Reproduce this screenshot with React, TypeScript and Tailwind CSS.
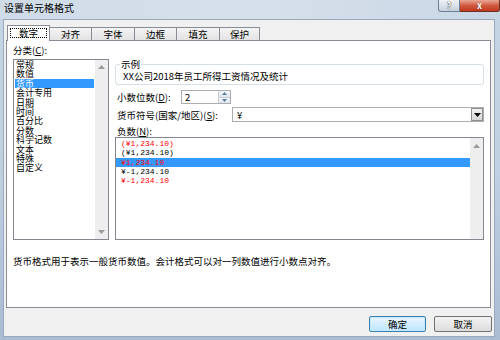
import React from "react";

const cats = ["常规", "数值", "货币", "会计专用", "日期", "时间", "百分比", "分数", "科学记数", "文本", "特殊", "自定义"];
const negs = [
  { t: "(¥1,234.10)", red: true, sel: false },
  { t: "(¥1,234.10)", red: false, sel: false },
  { t: "¥1,234.10", red: true, sel: true },
  { t: "¥-1,234.10", red: false, sel: false },
  { t: "¥-1,234.10", red: true, sel: false },
];
const tabs = [
  { t: "对齐", w: "w-[43px]" },
  { t: "字体", w: "w-[44px]" },
  { t: "边框", w: "w-[43px]" },
  { t: "填充", w: "w-[44px]" },
  { t: "保护", w: "w-[41px]" },
];

function UpTri() {
  return (
    <svg width="7" height="4" viewBox="0 0 7 4">
      <path d="M0 4 L3.5 0 L7 4 Z" fill="#9a9a9a" />
    </svg>
  );
}
function DownTri({ color = "#9a9a9a" }: { color?: string }) {
  return (
    <svg width="7" height="4" viewBox="0 0 7 4">
      <path d="M0 0 L7 0 L3.5 4 Z" fill={color} />
    </svg>
  );
}

function Scrollbar() {
  return (
    <div className="w-[13px] self-stretch bg-[#eeeeee] flex flex-col items-center justify-between py-[5px]">
      <UpTri />
      <DownTri />
    </div>
  );
}

function U({ c }: { c: string }) {
  return (
    <>
      (<span className="underline">{c}</span>)
    </>
  );
}

export default function App() {
  return (
    <div className="w-[500px] h-[340px] flex flex-col bg-gradient-to-b from-[#c6d5e4] via-[#bfd0e2] to-[#a9bcd2] font-['Noto_Sans_CJK_SC',sans-serif] text-black overflow-hidden">
      {/* title bar */}
      <div className="h-[19px] flex items-start shrink-0 bg-gradient-to-r from-[#cfdbe7] via-[#d6e0ea] to-[#c9d7e5]">
        <span className="pl-[4px] pt-[2px] text-[10px] leading-[12px] text-black">设置单元格格式</span>
        <div className="ml-auto flex">
          <div className="w-[22px] h-[12px] rounded-bl-[3px] border border-t-0 border-[#6f7f93] bg-gradient-to-b from-[#eef2f6] to-[#c6d1dd] flex items-center justify-center text-[9px] leading-[9px] font-bold text-white [text-shadow:0_0_1px_#333,0_0_1px_#333]">
            ?
          </div>
          <div className="w-[40px] h-[12px] rounded-br-[3px] border border-t-0 border-l-0 border-[#6e2e24] bg-gradient-to-b from-[#e9a796] via-[#cf5a40] to-[#c2381e] flex items-center justify-center text-[9px] leading-[9px] font-bold text-white [text-shadow:0_0_1px_#5a1a10]">
            x
          </div>
        </div>
      </div>

      {/* client area */}
      <div className="flex-1 ml-[3px] mr-[5px] mb-[3px] bg-[#f0f0f0] border border-[#9aa9bb] flex flex-col">
        {/* tabs */}
        <div className="h-[20px] flex items-end pl-[3px] shrink-0">
          <div className="relative z-10 w-[43px] h-[16px] -mb-[1px] bg-white border border-b-0 border-[#898c95] flex items-start justify-center pt-[2px]">
            <span className="w-[37px] h-[10px] border border-dotted border-black flex items-center justify-center text-[9.5px] leading-[10px]">
              数字
            </span>
          </div>
          {tabs.map((tb) => (
            <div
              key={tb.t}
              className={`${tb.w} h-[13px] -ml-[1px] border border-b-0 border-[#898c95] bg-gradient-to-b from-[#f4f4f4] to-[#e3e3e3] flex items-center justify-center text-[9.5px] leading-[10px]`}
            >
              {tb.t}
            </div>
          ))}
        </div>

        {/* panel */}
        <div className="ml-[2px] w-[485px] h-[268px] bg-white border border-[#898c95] shrink-0 flex flex-col">
          <div className="flex items-start">
            {/* left column */}
            <div className="ml-[6px] w-[96px] flex flex-col">
              <div className="mt-[3px] h-[12px] text-[9.5px] leading-[12px]">
                分类<U c="C" />:
              </div>
              <div className="mt-[3px] h-[181px] border border-[#828790] flex">
                <div className="flex-1 flex flex-col">
                  {cats.map((c) => (
                    <div
                      key={c}
                      className={`h-[9.4px] text-[9px] leading-[9.4px] pl-[1px] mx-[1px] whitespace-nowrap ${c === "货币" ? "bg-[#3399ff] text-white" : ""}`}
                    >
                      {c}
                    </div>
                  ))}
                </div>
                <Scrollbar />
              </div>
            </div>

            {/* right column */}
            <div className="ml-[6px] w-[369px] flex flex-col">
              <div className="relative mt-[23px] h-[21px] border border-[#d5dfe5] rounded-[3px] pl-[7px] pt-[6px] text-[9.5px] leading-[10px] whitespace-nowrap">
                <span className="absolute left-[4px] -top-[7px] bg-white px-[1px] text-[9.5px] leading-[12px]">示例</span>
                XX公司2018年员工所得工资情况及统计
              </div>

              <div className="mt-[5px] h-[14px] flex items-center">
                <div className="w-[66px] pl-[2px] text-[9.5px] leading-[12px] whitespace-nowrap">
                  小数位数<U c="D" />:
                </div>
                <div className="w-[50px] h-[14px] border border-[#abadb3] flex">
                  <div className="flex-1 pl-[3px] text-[9.5px] leading-[12px]">2</div>
                  <div className="w-[12px] flex flex-col border-l border-[#c8ccd4]">
                    <div className="flex-1 bg-gradient-to-b from-[#f4f6f9] to-[#dfe6ee] flex items-center justify-center border-b border-[#c8ccd4]">
                      <svg width="5" height="3" viewBox="0 0 5 3"><path d="M0 3 L2.5 0 L5 3 Z" fill="#5a7ea8" /></svg>
                    </div>
                    <div className="flex-1 bg-gradient-to-b from-[#f4f6f9] to-[#dfe6ee] flex items-center justify-center">
                      <svg width="5" height="3" viewBox="0 0 5 3"><path d="M0 0 L5 0 L2.5 3 Z" fill="#5a7ea8" /></svg>
                    </div>
                  </div>
                </div>
              </div>

              <div className="mt-[3px] h-[15px] flex items-center">
                <div className="w-[117px] pl-[2px] text-[9.5px] leading-[12px] whitespace-nowrap">
                  货币符号(国家/地区)<U c="S" />:
                </div>
                <div className="w-[252px] h-[15px] border border-[#abadb3] flex items-center">
                  <div className="flex-1 pl-[4px] text-[9.5px] leading-[12px]">¥</div>
                  <div className="w-[12px] h-[13px] border border-[#8f8f8f] bg-gradient-to-b from-[#f2f2f2] to-[#d6d6d6] flex items-center justify-center">
                    <DownTri color="#000" />
                  </div>
                </div>
              </div>

              <div className="mt-[3px] h-[12px] pl-[2px] text-[9.5px] leading-[12px]">
                负数<U c="N" />:
              </div>

              <div className="h-[103px] border border-[#828790] flex">
                <div className="flex-1 flex flex-col pt-[1px]">
                  {negs.map((n, i) => (
                    <div
                      key={i}
                      className={`h-[9.3px] leading-[9.3px] pl-[5px] text-[8px] font-['Liberation_Mono',monospace] whitespace-nowrap ${n.sel ? "bg-[#3399ff]" : ""} ${n.red ? "text-[#ff0000]" : "text-black"}`}
                    >
                      {n.t}
                    </div>
                  ))}
                </div>
                <div className="w-[13px] self-stretch bg-[#eeeeee] flex flex-col items-center pt-[6px]">
                  <UpTri />
                </div>
              </div>
            </div>
          </div>

          <div className="mt-[15px] pl-[6px] h-[12px] text-[9.5px] leading-[12px] whitespace-nowrap">
            货币格式用于表示一般货币数值。会计格式可以对一列数值进行小数点对齐。
          </div>
        </div>

        {/* buttons */}
        <div className="mt-[8px] flex justify-end gap-[8px] mr-[2px]">
          <div className="w-[57px] h-[16px] rounded-[2px] border border-[#3c7fb1] bg-gradient-to-b from-[#eaf6fd] to-[#bee6fd] shadow-[inset_0_0_0_1px_#c5e9fc] flex items-center justify-center text-[9.5px] leading-[12px]">
            确定
          </div>
          <div className="w-[58px] h-[16px] rounded-[2px] border border-[#707070] bg-gradient-to-b from-[#f2f2f2] to-[#dddddd] flex items-center justify-center text-[9.5px] leading-[12px]">
            取消
          </div>
        </div>
      </div>
    </div>
  );
}
